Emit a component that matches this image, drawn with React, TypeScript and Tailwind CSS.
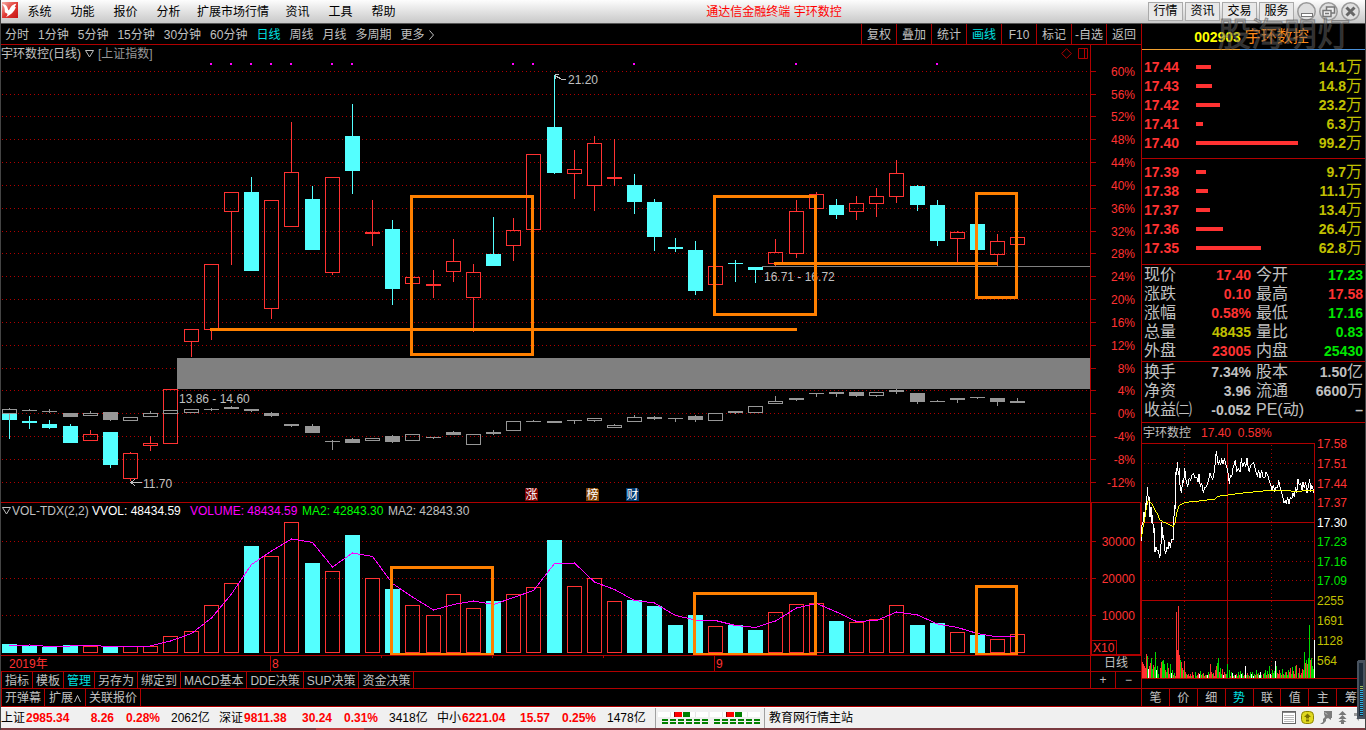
import React from "react";

type Candle = { x: number; up: boolean; top: number; bottom: number; high: number; low: number; volTop: number };

const CENTERS = [
  9, 29, 49, 70, 90, 110, 130, 150, 170, 191, 211, 231, 251, 271, 291, 312, 332, 352, 372, 392, 412, 433, 453, 473, 493,
  513, 533, 554, 574, 594, 614, 634, 654, 675, 695, 715, 735, 755, 775, 796, 816, 836, 856, 876, 896, 917, 937, 957, 977,
  997, 1017,
];

// direction, body top, body bottom, high, low, top of the volume bar
const STOCK: [0 | 1, number, number, number, number, number][] = [
  [0, 413, 420, 413, 439, 644], [0, 421, 423, 416, 429, 646], [0, 424, 428, 420, 429, 647], [0, 426, 443, 424, 443, 645],
  [1, 434, 441, 430, 441, 646], [0, 432, 465, 432, 468, 647], [1, 453, 479, 452, 481, 646], [1, 443, 446, 436, 451, 646],
  [1, 389, 444, 389, 444, 636], [1, 329, 342, 329, 357, 631], [1, 264, 330, 264, 340, 605], [1, 192, 212, 192, 265, 583],
  [0, 192, 271, 177, 271, 546], [1, 200, 309, 200, 319, 556], [1, 172, 227, 122, 227, 522], [0, 199, 250, 186, 250, 563],
  [1, 177, 273, 177, 275, 571], [0, 136, 171, 104, 194, 535], [1, 232, 234, 200, 246, 578], [0, 229, 289, 220, 305, 589],
  [1, 277, 284, 277, 284, 605], [1, 284, 286, 270, 298, 615], [1, 261, 272, 239, 282, 594], [1, 272, 298, 264, 332, 608],
  [0, 254, 266, 217, 266, 601], [1, 230, 246, 218, 261, 594], [1, 154, 230, 154, 230, 587], [0, 127, 173, 75, 174, 540],
  [1, 169, 174, 150, 199, 586], [1, 143, 186, 136, 211, 578], [1, 177, 179, 139, 186, 601], [0, 185, 202, 174, 214, 600],
  [0, 202, 237, 199, 251, 606], [0, 247, 249, 238, 252, 625], [0, 250, 291, 241, 295, 615], [1, 266, 285, 266, 285, 626],
  [0, 263, 264, 260, 282, 625], [0, 267, 270, 267, 283, 630], [1, 252, 264, 239, 266, 612], [1, 211, 254, 200, 258, 604],
  [1, 194, 209, 192, 209, 603], [0, 205, 215, 199, 219, 621], [1, 203, 212, 196, 220, 622], [1, 196, 204, 188, 217, 619],
  [1, 173, 197, 160, 203, 605], [0, 186, 205, 185, 211, 625], [0, 205, 241, 200, 246, 623], [1, 232, 239, 231, 262, 632],
  [0, 224, 250, 224, 250, 635], [1, 241, 255, 234, 266, 639], [1, 237, 245, 237, 245, 634],
];

// direction, body top, body bottom, high, low
const INDEX: [0 | 1, number, number, number, number][] = [
  [1, 409, 414, 408, 420], [0, 410, 411, 409, 411], [0, 411, 412, 409, 413], [0, 413, 417, 413, 417], [1, 413, 416, 411, 416],
  [0, 412, 420, 412, 421], [1, 417, 421, 417, 421], [1, 413, 417, 411, 417], [1, 410, 414, 410, 414], [1, 409, 413, 409, 413],
  [0, 409, 410, 408, 411], [0, 407, 409, 406, 409], [0, 409, 411, 409, 412], [0, 413, 416, 412, 417], [0, 424, 426, 424, 427],
  [0, 426, 433, 424, 433], [0, 441, 442, 440, 450], [0, 439, 443, 438, 443], [1, 438, 441, 438, 441], [0, 436, 442, 435, 443],
  [1, 434, 441, 434, 441], [0, 437, 438, 437, 439], [0, 432, 435, 431, 435], [1, 434, 445, 434, 445], [0, 432, 434, 430, 435],
  [1, 421, 431, 421, 431], [0, 421, 422, 420, 422], [0, 421, 423, 421, 423], [0, 420, 421, 420, 424], [1, 418, 421, 418, 422],
  [1, 425, 428, 424, 428], [1, 417, 422, 415, 422], [0, 417, 419, 416, 420], [0, 418, 419, 418, 422], [0, 416, 420, 415, 422],
  [1, 413, 421, 413, 421], [0, 411, 413, 411, 414], [1, 406, 413, 406, 413], [1, 401, 404, 396, 404], [0, 398, 400, 398, 401],
  [0, 393, 394, 393, 397], [0, 392, 394, 392, 397], [0, 392, 396, 392, 397], [1, 392, 396, 392, 397], [0, 390, 392, 389, 394],
  [0, 393, 402, 393, 404], [0, 401, 402, 400, 402], [0, 398, 400, 398, 403], [0, 397, 398, 397, 399], [0, 398, 402, 398, 406],
  [0, 401, 403, 398, 403],
];

const CANDLES: Candle[] = STOCK.map(([up, top, bottom, high, low, volTop], i) => ({
  x: CENTERS[i], up: up === 1, top, bottom, high, low, volTop,
}));

const PERCENT_GRID: [string, number][] = [
  ["60%", 71], ["56%", 94], ["52%", 116], ["48%", 139], ["44%", 162], ["40%", 185], ["36%", 208], ["32%", 231],
  ["28%", 253], ["24%", 276], ["20%", 299], ["16%", 322], ["12%", 345], ["8%", 368], ["4%", 390], ["0%", 413],
  ["-4%", 436], ["-8%", 459], ["-12%", 482],
];
const VOLUME_GRID: [string, number][] = [["30000", 541], ["20000", 578], ["10000", 615]];
const SIGNALS = [10, 11, 12, 13, 14, 16, 17, 25, 26, 31, 39, 46];

const RED = "#ff3232";
const CYAN = "#54ffff";
const GRAY = "#979797";
const LINE = "#b00000";
const ORANGE = "#ff8000";
const svgText = { fontFamily: '"Liberation Sans", "Noto Sans CJK SC", sans-serif', fontSize: 12 };

function Stick(p: { x: number; hollow: boolean; top: number; bottom: number; high: number; low: number; color: string }) {
  const thin = p.bottom - p.top <= 2;
  return (
    <g fill={p.color}>
      {p.high < p.top && <rect x={p.x} y={p.high} width={1} height={p.top - p.high} />}
      {p.low > p.bottom && <rect x={p.x} y={p.bottom} width={1} height={p.low - p.bottom} />}
      {p.hollow && !thin ? (
        <rect x={p.x - 6.5} y={p.top + 0.5} width={14} height={p.bottom - p.top - 1} fill="none" stroke={p.color} />
      ) : (
        <rect x={p.x - 7} y={p.top} width={15} height={p.bottom - p.top} />
      )}
    </g>
  );
}

function Grid({ rows }: { rows: [string, number][] }) {
  return (
    <>
      {rows.map(([label, y]) => (
        <g key={label}>
          <line x1={2} x2={1089} y1={y + 0.5} y2={y + 0.5} stroke={LINE} strokeDasharray="1 3" />
          <rect x={1091} y={y} width={5} height={1} fill={LINE} />
          <text x={1135} y={y + 5} textAnchor="end" fill={RED} {...svgText}>{label}</text>
        </g>
      ))}
    </>
  );
}

function Frame({ x, y, w, h }: { x: number; y: number; w: number; h: number }) {
  return <rect x={x + 1.5} y={y + 1.5} width={w - 3} height={h - 3} fill="none" stroke={ORANGE} strokeWidth={3} />;
}

function PriceChart() {
  return (
    <svg viewBox="1 62 1140 440" className="block w-full" shapeRendering="crispEdges" role="img" aria-label="日线">
      <Grid rows={PERCENT_GRID} />
      <rect x={1090} y={62} width={1} height={440} fill={LINE} />
      {SIGNALS.map((i) => <rect key={i} x={CENTERS[i] - 1} y={63} width={2} height={2} fill="#ff00ff" />)}
      {CANDLES.map((c) => (
        <Stick key={c.x} x={c.x} hollow={c.up} top={c.top} bottom={c.bottom} high={c.high} low={c.low} color={c.up ? RED : CYAN} />
      ))}
      {INDEX.map(([up, top, bottom, high, low], i) => (
        <Stick key={i} x={CENTERS[i]} hollow={up === 1} top={top} bottom={bottom} high={high} low={low} color={GRAY} />
      ))}
      <rect x={177} y={358} width={913} height={31} fill="#808080" />
      <rect x={762} y={266} width={328} height={1} fill="#808080" />
      <g fill="#c0c0c0" {...svgText}>
        <text x={568} y={84}>21.20</text>
        <text x={764} y={281}>16.71 - 16.72</text>
        <text x={179} y={403}>13.86 - 14.60</text>
        <text x={143} y={488}>11.70</text>
      </g>
      <g stroke="#c0c0c0" fill="none">
        <path d="M566 79.500H562L555 75.500M555 79V74.500H559" />
        <path d="M142 482.500H131M135 479L131 482.500L135 486" />
      </g>
      <Frame x={410} y={195} w={124} h={161} />
      <Frame x={713} y={195} w={104} h={121} />
      <Frame x={975} y={192} w={43} h={107} />
      <rect x={210} y={328} width={587} height={3} fill={ORANGE} />
      <rect x={774} y={262} width={224} height={3} fill={ORANGE} />
      {([[525, "#7c0000", "涨"], [586, "#804000", "榜"], [626, "#003a72", "财"]] as [number, string, string][]).map(([x, bg, t]) => (
        <g key={t}>
          <path d={`M${x} 488h11l2 2v11h-13z`} fill={bg} />
          <text x={x + 0.5} y={499} fill="#fff" {...svgText}>{t}</text>
        </g>
      ))}
    </svg>
  );
}

function VolumeChart() {
  const average = CANDLES.map((c, i) => {
    const prev = i === 0 ? 648 : CANDLES[i - 1].volTop;
    return `${c.x + 0.5},${(c.volTop + prev) / 2}`;
  }).join(" ");
  return (
    <svg viewBox="1 519 1140 136" className="block w-full" shapeRendering="crispEdges" role="img" aria-label="VOL">
      <Grid rows={VOLUME_GRID} />
      <rect x={1090} y={519} width={2} height={136} fill={LINE} />
      <rect x={1140} y={519} width={1} height={136} fill={LINE} />
      <rect x={1090} y={654} width={51} height={1} fill={LINE} />
      {CANDLES.map((c) =>
        c.up ? (
          <rect key={c.x} x={c.x - 6.5} y={c.volTop + 0.5} width={14} height={652 - c.volTop} fill="none" stroke={RED} />
        ) : (
          <rect key={c.x} x={c.x - 7} y={c.volTop} width={15} height={653 - c.volTop} fill={CYAN} />
        ),
      )}
      <polyline points={average} fill="none" stroke="#ff00ff" />
      <Frame x={390} y={566} w={104} h={90} />
      <Frame x={693} y={592} w={124} h={64} />
      <Frame x={975} y={585} w={43} h={71} />
      <rect x={1091.500} y={640.500} width={25} height={14} fill="#000" stroke={LINE} />
      <text x={1093} y={652} fill={RED} {...svgText}>X10</text>
    </svg>
  );
}

const PRICE_PATH =
  "17,347 18,300 22,290 24,262 27,275 29,235 32,240 34,185 37,225 40,215 42,275 45,245 47,295 50,270 52,325 55,310 57,380 60,365 64,378 68,375 70,398 74,390 77,290 80,340 83,330 86,375 89,388 92,365 96,372 99,350 103,368 106,345 112,345 115,240 117,255 119,140 122,150 124,110 127,150 130,130 132,180 136,205 140,165 143,175 146,130 150,165 155,185 160,158 164,168 168,150 173,145 177,160 182,155 186,170 189,148 193,185 197,175 202,205 206,185 209,190 213,180 218,165 222,145 226,155 230,165 234,145 238,110 241,78 244,100 247,120 250,105 254,120 257,100 261,118 265,100 270,120 274,130 277,150 280,178 283,150 287,155 291,130 295,118 298,105 302,140 307,130 312,140 316,100 320,125 325,110 329,125 333,100 337,130 340,140 344,120 349,118 353,112 357,130 360,140 364,155 368,135 372,160 377,135 381,155 386,160 390,140 395,150 399,165 404,180 408,195 412,180 416,200 420,185 425,190 428,165 432,185 436,200 440,215 444,235 448,225 451,238 455,215 459,238 463,215 467,222 471,205 475,215 479,185 482,205 486,162 490,180 494,175 498,195 501,172 505,190 509,172 513,205 517,185 521,162 524,200 527,180 530,185 533,205";
const MEAN_PATH =
  "17,335 20,310 25,290 30,255 36,227 42,230 50,240 56,255 64,265 72,285 80,290 95,297 112,305 117,295 122,265 128,245 135,238 150,232 180,229 237,222 245,214 275,210 310,205 350,201 390,197 430,196 480,199 535,196";

// volume bars of the session: height in pixels, then r, g or w for the colour
const MINUTES = (
  "16r 14r 12r 10r 24r 22g 9w 12r 15r 20g 9g 13r 11g 26g 8w 12g 4g 10r 16r 17g 18g 14g 8r 6g 15g 10r 4r 14g 5w 8g 3r 5g 2r 66r 28r 72r 23r 18g 16r 10r 8g 17r 6r 4g 3r 4r 2r 4r 2g 6r 3r 6g 2g 3r 5r 4w 7g 3r 4g 5r 2r 3g 3r 3w 6g 4r 14r 6r 4g 5r 2r 8r 12r 15g 20g 6r 10g 4g 9r 3w 6r 4r 4g 14g 8g 2r 6g 5w 2r 3g 3w 4r 2g 6g 3r 7g 4w 5g 2g 3r 12w 3g 5r 3g 2r 6g 4w 6g 2w 4g 3r 8g 4r 5g 3w 6w 3g 4r 5g 8g 3r 7g 4r 12g 4w 3r 8g 5g 7g 17w 12g 5r 4r 8r 5g 3r 9g 4r 3g 6g 6r 3g 8g 6r 10r 4g 11g 7r 4r 12g 13r 5g 10r 3g 5r 9r 8g 26g 15r 18g 14r 20g 53g 18r 20g 12g 9g 38w"
).split(" ");
const MINUTE_COLOR: Record<string, string> = { r: RED, g: "#00d800", w: "#ffffff" };

const MINI_LABELS: [string, number, string][] = [
  ["17.58", 443, RED], ["17.51", 463, RED], ["17.44", 483, RED], ["17.37", 502, RED], ["17.30", 522, "#ffffff"],
  ["17.23", 541, "#00e600"], ["17.16", 561, "#00e600"], ["17.09", 580, "#00e600"], ["2255", 600, "#c0c000"],
  ["1691", 620, "#c0c000"], ["1128", 640, "#c0c000"], ["564", 660, "#c0c000"],
];

function MinuteChart() {
  return (
    <svg viewBox="1142 443 223 245" className="block w-full overflow-visible" shapeRendering="crispEdges" role="img" aria-label="分时走势">
      <g stroke={LINE} strokeDasharray="1 3">
        {[463, 483, 502, 541, 561, 580, 618, 638, 658].map((y) => <line key={y} x1={1144} x2={1314} y1={y + 0.5} y2={y + 0.5} />)}
        {[1184, 1271].map((x) => <line key={x} x1={x + 0.5} x2={x + 0.5} y1={445} y2={678} />)}
      </g>
      <g fill={LINE}>
        {[443, 522, 600].map((y) => <rect key={y} x={1142} y={y} width={173} height={1} />)}
        <rect x={1142} y={678} width={223} height={1} />
        {[1227, 1314].map((x) => <rect key={x} x={x} y={443} width={1} height={235} />)}
      </g>
      {MINUTES.map((bar, i) => {
        const height = parseInt(bar, 10);
        const step = 172 / (MINUTES.length - 1);
        return (
          <rect key={i} x={1142 + Math.round(i * step)} y={678 - height} width={1} height={height} fill={MINUTE_COLOR[bar.slice(-1)]} />
        );
      })}
      <g transform="translate(1136 425) scale(0.33333)" fill="none" strokeWidth={3}>
        <polyline points={PRICE_PATH} stroke="#fff" />
        <polyline points={MEAN_PATH} stroke="#ffff00" />
      </g>
      {MINI_LABELS.map(([t, y, fill]) => <text key={t} x={1317} y={y + 5} fill={fill} {...svgText}>{t}</text>)}
    </svg>
  );
}

const ASKS: [string, number, string][] = [["17.44", 15, "14.1"], ["17.43", 16, "14.8"], ["17.42", 24, "23.2"], ["17.41", 7, "6.3"], ["17.40", 102, "99.2"]];
const BIDS: [string, number, string][] = [["17.39", 10, "9.7"], ["17.38", 12, "11.1"], ["17.37", 14, "13.4"], ["17.36", 27, "26.4"], ["17.35", 65, "62.8"]];

function OrderRows({ rows }: { rows: [string, number, string][] }) {
  return (
    <table className="w-full table-fixed border-collapse">
      <tbody>
        {rows.map(([price, width, amount]) => (
          <tr key={price} className="h-[19px]">
            <td className="w-[54px] p-0 pl-[2px] text-sm leading-[18px] font-bold text-[#ff3232]">{price}</td>
            <td className="p-0">
              <div className="h-1 bg-[#ff3232]" style={{ width }} />
            </td>
            <td className="w-[60px] p-0 pr-[3px] text-right text-sm leading-[18px] font-bold whitespace-nowrap text-[#c0c000]">
              {amount}
              <span className="text-base leading-none font-normal">万</span>
            </td>
          </tr>
        ))}
      </tbody>
    </table>
  );
}

type Quote = [string, string, string, string, string, string];
const QUOTES: Quote[] = [
  ["现价", "17.40", "text-[#ff3232]", "今开", "17.23", "text-[#00e600]"],
  ["涨跌", "0.10", "text-[#ff3232]", "最高", "17.58", "text-[#ff3232]"],
  ["涨幅", "0.58%", "text-[#ff3232]", "最低", "17.16", "text-[#00e600]"],
  ["总量", "48435", "text-[#c0c000]", "量比", "0.83", "text-[#00e600]"],
  ["外盘", "23005", "text-[#ff3232]", "内盘", "25430", "text-[#00e600]"],
];
const BASICS: Quote[] = [
  ["换手", "7.34%", "text-[#c0c0c0]", "股本", "1.50亿", "text-[#c0c0c0]"],
  ["净资", "3.96", "text-[#c0c0c0]", "流通", "6600万", "text-[#c0c0c0]"],
  ["收益㈡", "-0.052", "text-[#c0c0c0]", "PE(动)", "–", "text-[#c0c0c0]"],
];

function Amount({ text, tone }: { text: string; tone: string }) {
  const unit = /[亿万]$/.test(text) ? text.slice(-1) : "";
  return (
    <span className={`text-sm leading-[19px] font-bold ${tone}`}>
      {unit ? text.slice(0, -1) : text}
      {unit && <span className="text-base leading-none font-normal">{unit}</span>}
    </span>
  );
}

function QuoteGrid({ rows }: { rows: Quote[] }) {
  return (
    <dl className="grid grid-cols-2 gap-x-[5px] px-[2px] text-base leading-[19px]">
      {rows.map(([a, av, at, b, bv, bt]) => (
        <React.Fragment key={a}>
          <div className="flex h-[19px] justify-between whitespace-nowrap"><dt>{a}</dt><dd><Amount text={av} tone={at} /></dd></div>
          <div className="flex h-[19px] justify-between whitespace-nowrap"><dt>{b}</dt><dd><Amount text={bv} tone={bt} /></dd></div>
        </React.Fragment>
      ))}
    </dl>
  );
}

function Logo() {
  return (
    <svg width={16} height={16} viewBox="0 0 48 48" aria-hidden="true">
      <defs>
        <linearGradient id="logo" x1="0" y1="0" x2="1" y2="1">
          <stop offset="0" stopColor="#f6b0a8" />
          <stop offset="0.5" stopColor="#e03a34" />
          <stop offset="1" stopColor="#c81414" />
        </linearGradient>
      </defs>
      <rect width={48} height={48} fill="url(#logo)" />
      <path d="M0 7C8 5 15 9 18 22C20 29 22 22 27 14C31 8 36 6 43 5L38 15L42 16C36 30 26 39 12 46C18 38 18 34 12 33C4 31 14 20 0 7Z" fill="#fff" />
    </svg>
  );
}

function WindowButtons() {
  return (
    <div className="flex gap-[3px] pl-[3px]">
      {["minimize", "restore", "close"].map((kind) => (
        <button key={kind} type="button" aria-label={kind} className="block">
          <svg width={19} height={19} viewBox="0 0 19 19" fill="none" stroke="#777">
            <circle cx={9.5} cy={9.5} r={8.7} fill="#dedede" stroke="#999" strokeWidth={1.500} />
            {kind === "minimize" && <rect x={4.500} y={11.500} width={11} height={3} fill="#fff" />}
            {kind === "restore" && (
              <g fill="#eee" strokeWidth={1.500}>
                <rect x={7.500} y={5} width={8} height={6} />
                <rect x={4} y={8.500} width={8} height={6} />
                <path d="M6 11.500h4" />
              </g>
            )}
            {kind === "close" && <path d="M5.500 5.500l8 8M13.500 5.500l-8 8" stroke="#666" strokeWidth={3} />}
          </svg>
        </button>
      ))}
    </div>
  );
}

const MENUS = ["系统", "功能", "报价", "分析", "扩展市场行情", "资讯", "工具", "帮助"];
const PERIODS = ["分时", "1分钟", "5分钟", "15分钟", "30分钟", "60分钟", "日线", "周线", "月线", "多周期"];
const TOOLS = ["复权", "叠加", "统计", "画线", "F10", "标记", "-自选", "返回"];
const TEMPLATES = ["指标", "模板", "管理", "另存为", "绑定到", "MACD基本", "DDE决策", "SUP决策", "资金决策"];
const SIDE_TABS = ["笔", "价", "细", "势", "联", "值", "主", "筹"];
const MARKETS = [
  ["上证", "2985.34", "8.26", "0.28%", "2062亿"],
  ["深证", "9811.38", "30.24", "0.31%", "3418亿"],
  ["中小", "6221.04", "15.57", "0.25%", "1478亿"],
];

function Leds() {
  return (
    <svg width={104} height={14} viewBox="658 711 104 14" shapeRendering="crispEdges" aria-hidden="true">
      {[658, 710].map((x) => (
        <g key={x}>
          <rect x={x} y={712} width={50} height={5} fill="#fff" />
          <path d={`M${x + 12.500} 712v5M${x + 37.500} 712v5`} stroke="#e4e4e4" />
          <rect x={x + 16} y={712} width={8} height={5} fill="#f00" />
          <rect x={x + 16} y={712} width={1} height={5} fill="#800" />
          <rect x={x + 25} y={712} width={7} height={5} fill="#008000" />
          {[0, 1, 2, 3, 4, 5].map((n) => (
            <g key={n} fill="#008000">
              <rect x={x + 4 + n * 8} y={719} width={6} height={2} />
              <rect x={x + 4 + n * 8} y={722} width={6} height={2} />
            </g>
          ))}
        </g>
      ))}
    </svg>
  );
}

function TrayIcons() {
  return (
    <svg width={78} height={16} viewBox="1281 710 78 16" aria-hidden="true">
      <rect x={1282.500} y={711.500} width={13} height={12} fill="#fff" stroke="#666" />
      <path d="M1283 712.500h12" stroke="#888" />
      <path d="M1284 715.500h10M1284 717.500h10M1284 719.500h10M1284 721.500h10" stroke="#bbb" />
      <rect x={1301.500} y={711.500} width={12} height={12} rx={4} fill="#e0d820" stroke="#8c8400" />
      <path d="M1307.500 713.500l-3.500 3.500h2v1.500h3v-1.500h2zM1306 719.500h3v2h-3z" fill="#7a7000" />
      <path d="M1324 711h8v7h-1v2l-3-2l-2 1v2l-3 3h-3l3-2v-3l2-2l-1-3z" fill="#7c7c7c" />
      <path d="M1325 712.500l2 2" stroke="#ddd" />
      <path d="M1342.500 711l4 4h-8zM1342.500 715l4 4h-8zM1342.500 719l4 3h-8zM1341 721h3v3h-3z" fill="#777" />
      <path d="M1354 713h4v3h-4zM1356 718h3v3z" fill="#999" />
    </svg>
  );
}

export default function App() {
  return (
    <div className="relative overflow-hidden border-x border-[#444] bg-black font-['Liberation_Sans','Noto_Sans_CJK_SC',sans-serif] text-xs text-[#c0c0c0]">
      <header className="flex h-6 items-center border-b border-[#555] bg-linear-to-b from-[#fdfdfd] to-[#c8c8c8] text-black">
        <div className="flex w-[17px] items-center pb-1 pl-px"><Logo /></div>
        <nav className="flex">
          {MENUS.map((m) => (
            <button key={m} type="button" className={m.length > 2 ? "w-[86px]" : "w-[43px]"}>{m}</button>
          ))}
        </nav>
        <h1 className="flex-1 pr-[5px] text-center text-[#ff0000]">通达信金融终端 宇环数控</h1>
        <div className="flex gap-[2px]">
          {["行情", "资讯", "交易", "服务"].map((b) => (
            <button key={b} type="button" className="h-[19px] w-[35px] border border-[#aaa] bg-[#e8e8e8] text-center leading-[17px]">{b}</button>
          ))}
        </div>
        <div className="pr-[5px]"><WindowButtons /></div>
      </header>

      <div className="flex border-b border-[#b00000]">
        <main className="min-w-0 flex-1">
          <div className="flex h-[21px] items-stretch border-b border-[#b00000]">
            <nav className="flex flex-1 items-center gap-[9px] pt-px pl-1">
              {PERIODS.map((p) => (
                <button key={p} type="button" className={p === "日线" ? "text-[#00e0e0]" : ""}>{p}</button>
              ))}
              <button type="button" className="flex items-center gap-1">
                更多
                <svg width={5} height={10} viewBox="0 0 5 10" fill="none" stroke="currentColor" aria-hidden="true"><path d="M.5 .5l4 4.500l-4 4.500" /></svg>
              </button>
            </nav>
            {TOOLS.map((t) => (
              <button key={t} type="button" className={`w-[35px] border-l border-[#b00000] pt-px text-center whitespace-nowrap ${t === "画线" ? "text-[#00e0e0]" : ""}`}>{t}</button>
            ))}
          </div>

          <div className="flex h-[17px]">
            <div className="flex flex-1 items-center gap-1 pt-px">
              <span>宇环数控(日线)</span>
              <svg width={9} height={8} viewBox="0 0 9 8" fill="none" stroke="currentColor" aria-hidden="true"><path d="M.5 .5h8L4.500 7z" /></svg>
              <span className="text-[#979797]">[上证指数]</span>
            </div>
            <div className="flex items-center gap-[6px] pr-[2px]">
              <svg width={11} height={11} viewBox="0 0 11 11" fill="none" stroke="#b00000" aria-hidden="true"><path d="M5.500 .7L10.300 5.500L5.500 10.300L.7 5.500z" /></svg>
              <svg width={10} height={11} viewBox="0 0 10 11" fill="none" stroke="#b00000" aria-hidden="true"><path d="M.5 .5h9v10h-9zM6.500 .5v10" /></svg>
            </div>
            <div className="w-[51px] border-l border-[#b00000]" />
          </div>
          <PriceChart />

          <div className="flex h-[17px] border-t border-[#b00000]">
            <div className="flex flex-1 items-center whitespace-nowrap">
              <svg className="ml-px" width={9} height={8} viewBox="0 0 9 8" fill="none" stroke="currentColor" aria-hidden="true"><path d="M.5 .5h8L4.500 7z" /></svg>
              <span className="w-[81px] pl-px">VOL-TDX(2,2)</span>
              <span className="w-[98px] text-white">VVOL: 48434.59</span>
              <span className="w-[112px] text-[#ff00ff]">VOLUME: 48434.59</span>
              <span className="w-[86px] text-[#00ff00]">MA2: 42843.30</span>
              <span>MA2: 42843.30</span>
            </div>
            <div className="w-[51px] border-r border-l-2 border-[#b00000]" />
          </div>
          <VolumeChart />

          <div className="flex h-4 border-t border-[#b00000]">
            <svg viewBox="1 656 1089 15" className="block min-w-0 flex-1" shapeRendering="crispEdges">
              <g fill={LINE}>
                {[270, 714].map((x) => <rect key={x} x={x} y={656} width={1} height={15} />)}
                {[381, 492, 603].map((x) => <rect key={x} x={x} y={656} width={1} height={2} />)}
              </g>
              <g fill={RED} {...svgText}>
                <text x={9} y={668}>2019年</text>
                <text x={272} y={668}>8</text>
                <text x={716} y={668}>9</text>
              </g>
            </svg>
            <div className="w-[51px] border-l border-[#b00000] text-center leading-[15px]">日线</div>
          </div>

          <div className="flex h-[17px] border-t border-[#b00000] leading-4">
            <div className="flex flex-1 border-l border-[#b00000]">
              {TEMPLATES.map((t) => (
                <button key={t} type="button" className={`border-r border-[#b00000] px-[3px] pt-px whitespace-nowrap ${t === "管理" ? "text-[#00e0e0]" : ""}`}>{t}</button>
              ))}
            </div>
            <button type="button" className="w-[25px] border-l border-[#b00000] text-center">+</button>
            <button type="button" className="w-[26px] border-l border-[#b00000] text-center">−</button>
          </div>
          <div className="flex h-[18px] border-t border-l border-[#b00000] leading-4">
            <button type="button" className="border-r border-[#b00000] px-[3px] pt-px">开弹幕</button>
            <button type="button" className="flex items-center gap-px border-r border-[#b00000] px-[4px] pt-px">
              扩展
              <svg width={7} height={7} viewBox="0 0 7 7" fill="none" stroke="currentColor" aria-hidden="true"><path d="M.5 7L3.500 .5L6.500 7" /></svg>
            </button>
            <button type="button" className="border-r border-[#b00000] px-[3px] pt-px">关联报价</button>
          </div>
        </main>

        <aside className="flex w-[224px] flex-col border-l border-[#b00000]">
          <div className="flex h-[25px] items-center justify-center gap-1 pt-px pr-1">
            <strong className="text-sm text-[#ffff00]">002903</strong>
            <span className="text-base leading-6 text-[#ff8c1a]">宇环数控</span>
          </div>
          <div className="flex h-px"><div className="w-[98px] bg-[#f0a030]" /><div className="flex-1 bg-[#4a90d8]" /></div>
          <div className="border-b border-[#b00000] pt-[7px] pb-[6px]"><OrderRows rows={ASKS} /></div>
          <div className="border-b border-[#b00000] pt-[3px] pb-[7px]"><OrderRows rows={BIDS} /></div>
          <div className="border-b border-[#b00000] pb-px"><QuoteGrid rows={QUOTES} /></div>
          <div className="border-b border-[#b00000] pb-[3px]"><QuoteGrid rows={BASICS} /></div>
          <div className="flex h-5 items-center gap-[10px] pl-px">
            <span>宇环数控</span>
            <span className="text-[#ff3232]">17.40&nbsp; 0.58%</span>
          </div>
          <MinuteChart />
          <div className="flex h-[18px] border-t border-[#b00000]">
            {SIDE_TABS.map((t) => (
              <button key={t} type="button" className={`w-7 border-r border-[#b00000] pt-px text-center leading-4 last:border-r-0 ${t === "势" ? "text-[#00e0e0]" : ""}`}>{t}</button>
            ))}
          </div>
        </aside>
      </div>

      <footer className="flex h-[21px] items-center border-t border-white bg-[#f0f0f0] text-black">
        {MARKETS.map(([name, value, change, pct, amount]) => (
          <div key={name} className="grid w-[218px] grid-cols-[25px_48px_40px_46px_59px] whitespace-nowrap">
            <span>{name}</span>
            <b className="text-[#ff0000]">{value}</b>
            <b className="text-right text-[#ff0000]">{change}</b>
            <b className="text-right text-[#ff0000]">{pct}</b>
            <span className="pl-[11px]">{amount}</span>
          </div>
        ))}
        <div className="flex h-full items-center border-x border-[#a0a0a0] px-[2px]"><Leds /></div>
        <span className="flex-1 pl-1">教育网行情主站</span>
        <div className="pr-[6px]"><TrayIcons /></div>
      </footer>
      <div className="flex h-[2px] bg-[#7a3a40]"><div className="ml-[315px] w-12 bg-[#c04040]" /></div>

      <div aria-hidden="true" className="pointer-events-none absolute top-[11px] right-[15px] text-[33px] leading-[48px] text-[#808080]/40 [-webkit-text-stroke:1px_#4b4b4b80]">股海明灯</div>
      <svg className="absolute right-0 bottom-[11px]" width={8} height={59} viewBox="0 0 8 59" shapeRendering="crispEdges" aria-hidden="true">
        <rect width={10} height={59} rx={2} fill="#48525e" />
        <rect x={2} y={3} width={4} height={53} fill="#1c2a38" />
        <path d="M4 26V30" stroke="#a0c060" strokeWidth={3} strokeDasharray="1 1" />
        <path d="M4 30V55" stroke="#30b0e0" strokeWidth={3} strokeDasharray="1 1" />
      </svg>
    </div>
  );
}
